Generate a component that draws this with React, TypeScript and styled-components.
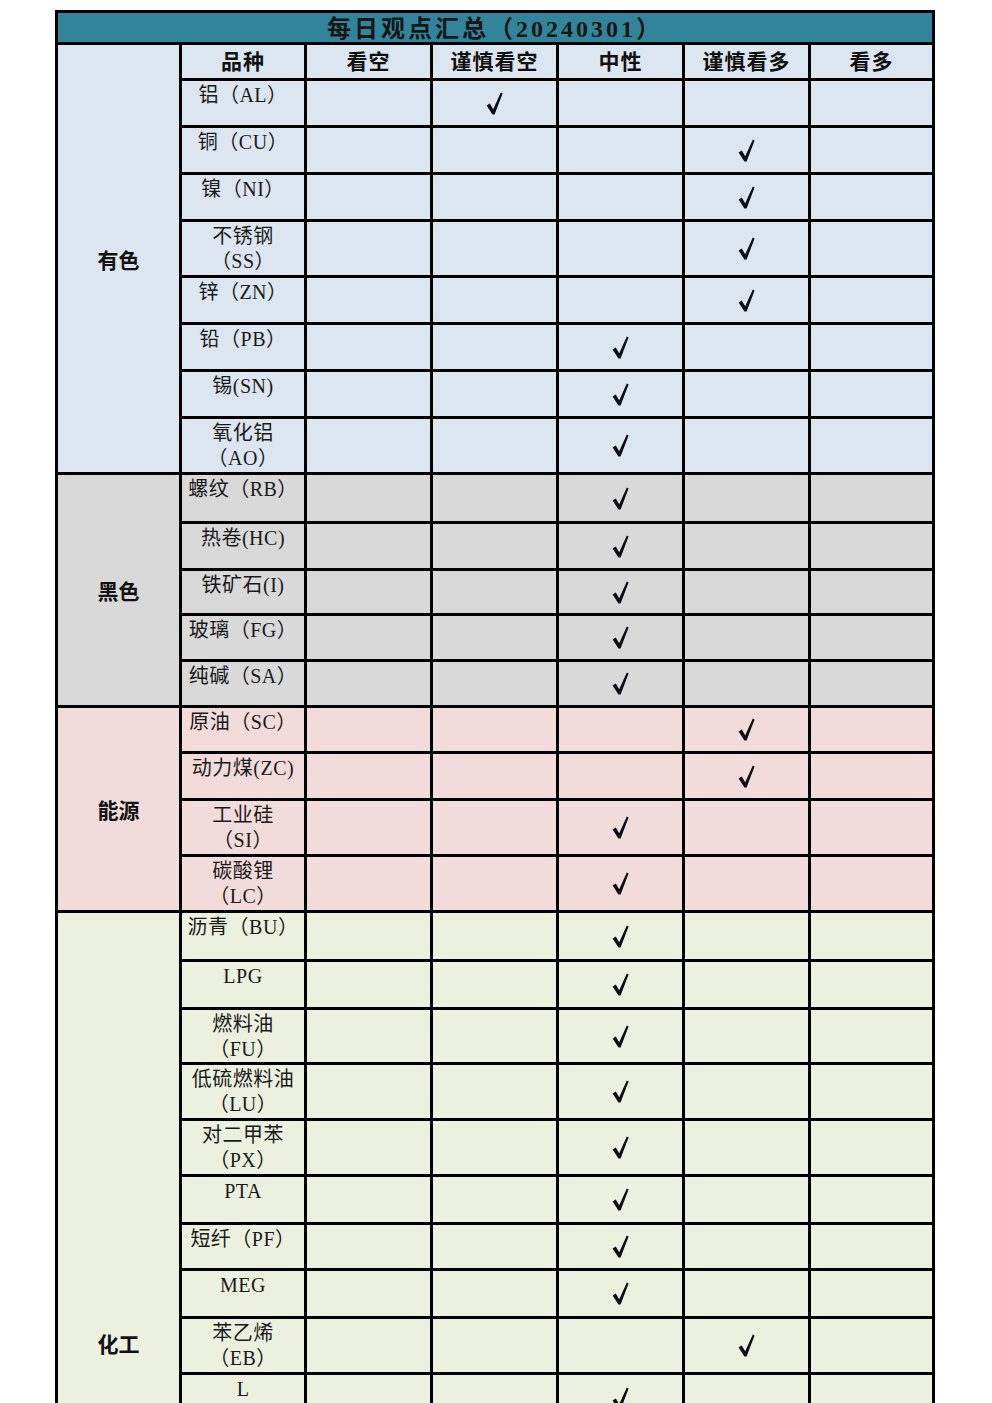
import React from "react";
import styled, { createGlobalStyle } from "styled-components";

const GlobalStyle = createGlobalStyle`
  html, body { margin: 0; padding: 0; background: #ffffff; }
  body { font-family: "Liberation Serif", "Noto Sans CJK SC", serif; }
`;

const Page = styled.div`
  width: 992px;
  height: 1403px;
  overflow: hidden;
  background: #ffffff;
  padding: 10px 0 0 55px;
  box-sizing: border-box;
`;

const Grid = styled.div<{ $rows: string }>`
  display: grid;
  width: 880px;
  box-sizing: border-box;
  grid-template-columns: 121px 122px 123px 123px 123px 123px 121px;
  grid-template-rows: ${(p) => p.$rows};
  gap: 3px;
  padding: 3px;
  background: #000000;
`;

const TitleCell = styled.div`
  grid-column: 1 / span 7;
  background: #31849a;
  display: flex;
  align-items: center;
  justify-content: center;
  font-family: "Liberation Serif", "Noto Sans CJK SC", serif;
  font-size: 24px;
  font-weight: 700;
  letter-spacing: 3px;
  color: #161616;
  padding-bottom: 2px;
`;

const CategoryCell = styled.div<{ $bg: string; $span: number }>`
  grid-column: 1;
  grid-row: span ${(p) => p.$span};
  background: ${(p) => p.$bg};
  display: flex;
  align-items: center;
  justify-content: center;
  font-family: "Noto Sans CJK SC", sans-serif;
  font-size: 21px;
  font-weight: 700;
  color: #111111;
`;

const HeaderCell = styled.div`
  background: #dce6f1;
  display: flex;
  align-items: center;
  justify-content: center;
  font-family: "Noto Sans CJK SC", sans-serif;
  font-size: 21px;
  font-weight: 700;
  letter-spacing: 1px;
  color: #111111;
  padding-bottom: 3px;
`;

const NameCell = styled.div<{ $bg: string }>`
  background: ${(p) => p.$bg};
  padding-top: 2px;
  text-align: center;
  white-space: pre-line;
  font-family: "Liberation Serif", "Noto Sans CJK SC", serif;
  font-size: 20px;
  line-height: 25px;
  letter-spacing: 0.5px;
  color: #1a1a1a;
  overflow: hidden;
`;

const MarkCell = styled.div<{ $bg: string }>`
  background: ${(p) => p.$bg};
  display: flex;
  align-items: center;
  justify-content: center;
`;

const Check = () => (
  <svg width="17" height="23" viewBox="0 0 17 23" aria-hidden="true">
    <path
      d="M0.6 13.6 L3.8 11.4 L7.2 17.2 L14.8 0.6 L16.6 1.6 L8.6 22.6 L6.4 22.6 Z"
      fill="#0d0d14"
    />
  </svg>
);

type Item = { name: string; mark: number; h: number };
type Group = { label: string; bg: string; items: Item[] };

const headers = ["品种", "看空", "谨慎看空", "中性", "谨慎看多", "看多"];

// rows of the table that continue below the visible page
const continuation: Item[] = Array.from({ length: 7 }, () => ({ name: "", mark: -1, h: 47 }));

const groups: Group[] = [
  {
    label: "有色",
    bg: "#dce6f1",
    items: [
      { name: "铝（AL）", mark: 1, h: 44 },
      { name: "铜（CU）", mark: 3, h: 44 },
      { name: "镍（NI）", mark: 3, h: 44 },
      { name: "不锈钢\n（SS）", mark: 3, h: 53 },
      { name: "锌（ZN）", mark: 3, h: 44 },
      { name: "铅（PB）", mark: 2, h: 44 },
      { name: "锡(SN)", mark: 2, h: 44 },
      { name: "氧化铝\n（AO）", mark: 2, h: 53 },
    ],
  },
  {
    label: "黑色",
    bg: "#d9d9d9",
    items: [
      { name: "螺纹（RB）", mark: 2, h: 46 },
      { name: "热卷(HC)", mark: 2, h: 44 },
      { name: "铁矿石(I)", mark: 2, h: 42 },
      { name: "玻璃（FG）", mark: 2, h: 43 },
      { name: "纯碱（SA）", mark: 2, h: 43 },
    ],
  },
  {
    label: "能源",
    bg: "#f2dcdb",
    items: [
      { name: "原油（SC）", mark: 3, h: 43 },
      { name: "动力煤(ZC)", mark: 3, h: 44 },
      { name: "工业硅\n（SI）", mark: 2, h: 53 },
      { name: "碳酸锂\n（LC）", mark: 2, h: 53 },
    ],
  },
  {
    label: "化工",
    bg: "#ebf1de",
    items: [
      { name: "沥青（BU）", mark: 2, h: 46 },
      { name: "LPG", mark: 2, h: 45 },
      { name: "燃料油\n（FU）", mark: 2, h: 52 },
      { name: "低硫燃料油\n（LU）", mark: 2, h: 53 },
      { name: "对二甲苯\n（PX）", mark: 2, h: 53 },
      { name: "PTA", mark: 2, h: 45 },
      { name: "短纤（PF）", mark: 2, h: 43 },
      { name: "MEG", mark: 2, h: 45 },
      { name: "苯乙烯\n（EB）", mark: 3, h: 53 },
      { name: "L", mark: 2, h: 47 },
      ...continuation,
    ],
  },
];

export default function App() {
  const rowHeights = [29, 33, ...groups.flatMap((g) => g.items.map((i) => i.h))];
  const rows = rowHeights.map((h) => `${h}px`).join(" ");

  return (
    <Page>
      <GlobalStyle />
      <Grid $rows={rows}>
        <TitleCell>每日观点汇总（20240301）</TitleCell>
        {groups.map((g, gi) => (
          <React.Fragment key={g.label}>
            <CategoryCell $bg={g.bg} $span={g.items.length + (gi === 0 ? 1 : 0)}>
              {g.label}
            </CategoryCell>
            {gi === 0 && headers.map((h) => <HeaderCell key={h}>{h}</HeaderCell>)}
            {g.items.map((it, ii) => (
              <React.Fragment key={`${g.label}-${ii}`}>
                <NameCell $bg={g.bg}>{it.name}</NameCell>
                {[0, 1, 2, 3, 4].map((c) => (
                  <MarkCell key={c} $bg={g.bg}>
                    {c === it.mark ? <Check /> : null}
                  </MarkCell>
                ))}
              </React.Fragment>
            ))}
          </React.Fragment>
        ))}
      </Grid>
    </Page>
  );
}
